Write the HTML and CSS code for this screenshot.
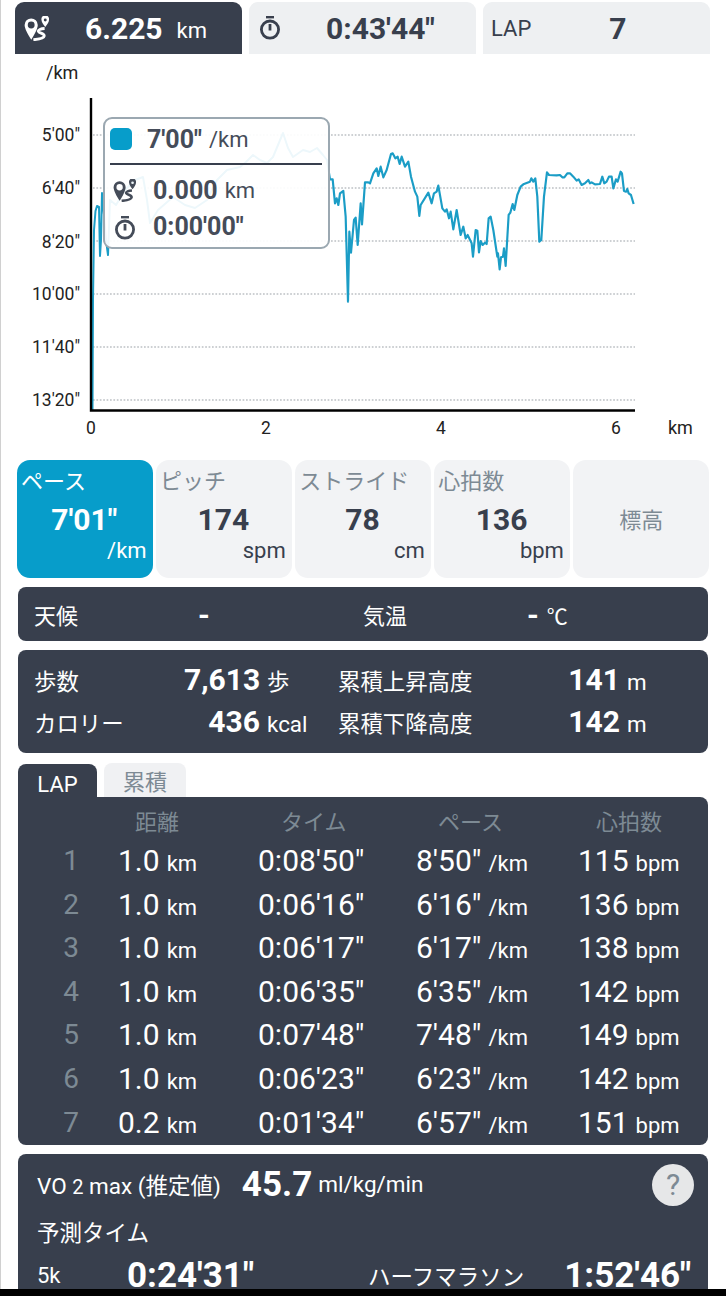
FILE: index.html
```html
<!DOCTYPE html>
<html lang="ja">
<head>
<meta charset="utf-8">
<title>Run detail</title>
<link rel="stylesheet" href="styles.css">
</head>
<body>
<div class="app">
  <svg width="0" height="0" class="defs">
    <symbol id="route" viewBox="0 0 24 24">
      <path d="M0.6 8.6 a6.3 6.3 0 1 1 12.6 0 C13.2 12 10 18 7 22.8 C3.8 18 0.6 12 0.6 8.6Z M3.6 8.6 a3.3 3.3 0 1 0 6.6 0 a3.3 3.3 0 1 0 -6.6 0Z" fill="currentColor" fill-rule="evenodd"/>
      <path d="M16.8 3.9 a3.7 3.7 0 1 1 7.2 0 C24 5.8 22 8.8 20.4 10.6 C18.8 8.8 16.8 5.8 16.8 3.9Z M19 3.9 a1.4 1.4 0 1 0 2.8 0 a1.4 1.4 0 1 0 -2.8 0Z" fill="currentColor" fill-rule="evenodd"/>
      <path d="M19.8 12 C16 12.2 13.4 13.2 13.8 14.8 C14.3 16.6 19.8 16.4 19.4 19.2 C19.1 21.4 14 22.4 9 22.8" fill="none" stroke="currentColor" stroke-width="2.7"/>
    </symbol>
    <symbol id="watch" viewBox="0 0 24 24">
      <path d="M8 1.2 H16" stroke="currentColor" stroke-width="2.4" fill="none"/>
      <circle cx="12" cy="13.6" r="8.6" fill="none" stroke="currentColor" stroke-width="2.8"/>
      <path d="M12 8 V14.5" stroke="currentColor" stroke-width="2.8" fill="none"/>
    </symbol>
  </svg>

  <div class="top-tabs">
    <div class="top-tab is-on">
      <svg class="ico-route"><use href="#route"/></svg>
      <span class="big dist">6.225</span><span class="unit top-unit">km</span>
    </div>
    <div class="top-tab">
      <svg class="ico-watch"><use href="#watch"/></svg>
      <span class="big time">0:43'44"</span>
    </div>
    <div class="top-tab">
      <span class="lap-label">LAP</span><span class="big lap-num">7</span>
    </div>
  </div>

  <div class="chart">
    <svg class="plot" width="726" height="406" viewBox="0 54 726 406">
      <g class="grid">
        <line x1="93" x2="635" y1="135" y2="135"/>
        <line x1="93" x2="635" y1="188" y2="188"/>
        <line x1="93" x2="635" y1="241" y2="241"/>
        <line x1="93" x2="635" y1="294" y2="294"/>
        <line x1="93" x2="635" y1="347" y2="347"/>
        <line x1="93" x2="635" y1="400" y2="400"/>
      </g>
      <polyline class="pace" points="92.5,410 93,300 94,230 95.5,211 97,206 99,207 100,256 101,240 102,193 104,215 106,240 108,255 110,200 116,205 125,190 135,180 143,177 147,200 150,223 158,210 173,197 185,205 195,208 207,200 217,180 227,170 240,167 246,162 253,155 260,160 267,163 273,157 278,145 283,133 288,148 293,157 303,150 310,152 317,148 323,155 327,160 330,179"/>
      <polyline class="pace pace-hi" points="0,118 8,118 15,190 20,175 25,195 30,160 40,153 47,230 54,485 58,275 63,338 72,240 77,233 83,315 92,190 96,253 105,127 115,127 120,130 130,100 140,85 145,108 152,80 160,112 170,90 183,42 188,40 196,55 203,50 209,72 215,50 225,80 235,65 243,110 255,155 262,170 268,228 272,195 295,158 305,190 312,160 320,155 325,137 337,205 345,215 350,208 357,235 362,215 370,268 380,210 392,285 400,260 407,295 413,285 425,310 429,350 437,270 442,272 447,337 452,303 458,315 465,308 470,312 476,235 482,230 490,270 502,350 504,340 509,388 513,352 519,350 522,325 527,378 536,225 541,218 548,192 553,210 562,165 572,140 580,133 600,125 604,115 610,125 616,115 622,170 628,305 634,300 642,170 651,97 657,105 680,106 690,105 697,112 703,112 712,100 720,100 730,110 740,122 746,118 755,135 765,130 775,120 780,130 785,127 795,133 810,132 817,110 823,130 830,125 837,110 845,110 850,145 858,118 863,125 872,95 876,100 882,153 888,155 892,147 896,160 903,165 911,192"/>
      <path class="axis" d="M91 98 V410.5 H635"/>
      <text class="ax-unit" x="46" y="79">/km</text>
      <g class="ax-y">
        <text x="80" y="141">5'00"</text>
        <text x="80" y="194">6'40"</text>
        <text x="80" y="248">8'20"</text>
        <text x="80" y="300">10'00"</text>
        <text x="80" y="353">11'40"</text>
        <text x="80" y="406">13'20"</text>
      </g>
      <g class="ax-x">
        <text x="91" y="434">0</text>
        <text x="266" y="434">2</text>
        <text x="441" y="434">4</text>
        <text x="616" y="434">6</text>
      </g>
      <text class="ax-unit" x="668" y="434">km</text>
    </svg>
    <div class="tip">
      <div class="tip-head">
        <span class="swatch"></span>
        <span class="tip-big">7'00"</span><span class="tip-unit">/km</span>
      </div>
      <div class="tip-row">
        <svg class="tip-ico"><use href="#route"/></svg>
        <span class="tip-big">0.000</span><span class="tip-unit">km</span>
      </div>
      <div class="tip-row">
        <svg class="tip-ico tip-watch"><use href="#watch"/></svg>
        <span class="tip-big">0:00'00"</span>
      </div>
    </div>
  </div>

  <div class="metrics">
    <div class="metric is-on">
      <div class="m-label">ペース</div>
      <div class="m-value">7'01"</div>
      <div class="m-unit">/km</div>
    </div>
    <div class="metric">
      <div class="m-label">ピッチ</div>
      <div class="m-value">174</div>
      <div class="m-unit">spm</div>
    </div>
    <div class="metric">
      <div class="m-label">ストライド</div>
      <div class="m-value">78</div>
      <div class="m-unit">cm</div>
    </div>
    <div class="metric">
      <div class="m-label">心拍数</div>
      <div class="m-value">136</div>
      <div class="m-unit">bpm</div>
    </div>
    <div class="metric metric-plain">標高</div>
  </div>

  <div class="band weather">
    <span class="w-a">天候</span>
    <b class="w-dash">-</b>
    <span class="w-b">気温</span>
    <span class="w-temp"><b class="w-dash-b">-</b><span class="w-c">℃</span></span>
  </div>

  <div class="band summary">
    <span>歩数</span>
    <b class="s-val">7,613</b><span class="s-unit">歩</span>
    <span>累積上昇高度</span>
    <b class="s-val">141</b><span class="s-unit">m</span>
    <span>カロリー</span>
    <b class="s-val">436</b><span class="s-unit">kcal</span>
    <span>累積下降高度</span>
    <b class="s-val">142</b><span class="s-unit">m</span>
  </div>

  <div class="lap-tabs">
    <div class="lap-tab is-on">LAP</div>
    <div class="lap-tab">累積</div>
  </div>
  <div class="band laps">
    <div class="lap-row lap-head">
      <span></span><span class="h-dist">距離</span><span class="h-time">タイム</span><span class="h-pace">ペース</span><span class="h-hr">心拍数</span>
    </div>
    <div class="lap-row"><span class="n">1</span><span>1.0<small>km</small></span><span>0:08'50"</span><span>8'50"<small>/km</small></span><span>115<small>bpm</small></span></div>
    <div class="lap-row"><span class="n">2</span><span>1.0<small>km</small></span><span>0:06'16"</span><span>6'16"<small>/km</small></span><span>136<small>bpm</small></span></div>
    <div class="lap-row"><span class="n">3</span><span>1.0<small>km</small></span><span>0:06'17"</span><span>6'17"<small>/km</small></span><span>138<small>bpm</small></span></div>
    <div class="lap-row"><span class="n">4</span><span>1.0<small>km</small></span><span>0:06'35"</span><span>6'35"<small>/km</small></span><span>142<small>bpm</small></span></div>
    <div class="lap-row"><span class="n">5</span><span>1.0<small>km</small></span><span>0:07'48"</span><span>7'48"<small>/km</small></span><span>149<small>bpm</small></span></div>
    <div class="lap-row"><span class="n">6</span><span>1.0<small>km</small></span><span>0:06'23"</span><span>6'23"<small>/km</small></span><span>142<small>bpm</small></span></div>
    <div class="lap-row"><span class="n">7</span><span>0.2<small>km</small></span><span>0:01'34"</span><span>6'57"<small>/km</small></span><span>151<small>bpm</small></span></div>
  </div>

  <div class="band vo2">
    <div class="vo2-line">
      <span class="vo2-name">VO <span class="sub2">2</span> max (推定値)</span>
      <b class="vo2-num">45.7</b><span class="vo2-unit">ml/kg/min</span>
      <span class="help">?</span>
    </div>
    <div class="pred-title">予測タイム</div>
    <div class="pred-line">
      <span class="p-5k">5k</span><b class="p-time">0:24'31"</b>
      <span class="p-half">ハーフマラソン</span><b class="p-time">1:52'46"</b>
    </div>
  </div>
</div>
</body>
</html>
```
FILE: styles.css
```css
html { background: #000; }
body {
  margin: 0;
  background: #000;
  font-family: Roboto, "Noto Sans CJK JP", sans-serif;
  color: #383f4d;
}
.app {
  box-sizing: border-box;
  width: 726px;
  height: 1289px;
  overflow: hidden;
  background: #fff;
  border-left: 1px solid #d0d0d0;
}
.defs { position: absolute; }
b { font-weight: 700; }

/* top tabs */
.top-tabs {
  display: flex;
  gap: 7px;
  padding: 2px 16px 0 14px;
  height: 52px;
}
.top-tab {
  position: relative;
  flex: 1;
  display: flex;
  align-items: center;
  background: #eef0f2;
  border-radius: 9px 9px 0 0;
  font-size: 22px;
}
.top-tab.is-on { background: #383f4d; color: #fff; }
.big { font-size: 30px; font-weight: 700; }
.ico-route { width: 25px; height: 25px; margin-left: 9px; }
.ico-watch { width: 24px; height: 24px; margin-left: 9px; }
.dist { margin-left: 36px; }
.top-unit { margin-left: 14px; margin-top: 4px; }
.time { margin-left: 44px; }
.lap-label { margin-left: 8px; }
.lap-num { margin-left: 78px; }

/* chart */
.chart { position: relative; height: 406px; margin-left: -1px; }
.plot { display: block; }
.grid line { stroke: #cdd0d3; stroke-width: 1.8; stroke-dasharray: 1.7 1.7; }
.pace { fill: none; stroke: #1b9dc6; stroke-width: 2; stroke-linejoin: round; }
.pace-hi { stroke-width: 6.5; transform: translate(330px, 140px) scale(.3333); }
.axis { fill: none; stroke: #000; stroke-width: 2.4; }
.ax-unit { font-size: 18px; fill: #222; }
.ax-y text { font-size: 17.5px; fill: #222; text-anchor: end; }
.ax-x text { font-size: 17.5px; fill: #222; text-anchor: middle; }

.tip {
  position: absolute;
  left: 103px;
  top: 63px;
  box-sizing: border-box;
  width: 227px;
  height: 132px;
  padding: 0 6px 0 5px;
  background: rgba(255, 255, 255, .92);
  border: 2px solid #9ba8b1;
  border-radius: 9px;
}
.tip-head {
  display: flex;
  align-items: center;
  height: 40px;
  padding-bottom: 4px;
  border-bottom: 2px solid #383f4d;
}
.swatch {
  width: 22px;
  height: 22px;
  border-radius: 5px;
  background: #079dca;
  margin-right: 15px;
}
.tip-big { font-size: 25px; font-weight: 700; color: #454c59; }
.tip-unit { font-size: 22px; margin-left: 7px; color: #454c59; }
.tip-row { display: flex; align-items: center; height: 36px; color: #454c59; }
.tip-row:nth-child(2) { margin-top: 7px; }
.tip-ico { width: 23px; height: 23px; margin: 0 17px 0 3px; }
.tip-watch { width: 24px; height: 24px; margin: 3px 16px 0 3px; }

/* metrics */
.metrics {
  display: grid;
  grid-template-columns: repeat(5, 1fr);
  gap: 3.5px;
  height: 118px;
  margin: 0 17px 0 16px;
}
.metric {
  box-sizing: border-box;
  min-width: 0;
  padding: 7px 6px 0 4px;
  background: #f2f3f5;
  border-radius: 13px;
}
.metric.is-on { background: #079dca; color: #fff; }
.m-label { font-size: 22px; line-height: 30px; color: #7d8a94; white-space: nowrap; }
.is-on .m-label { color: #fff; }
.m-value { font-size: 30px; font-weight: 700; line-height: 38px; text-align: center; margin: 4px 0 0 1px; }
.m-unit { font-size: 22px; line-height: 30px; text-align: right; margin-top: -3px; }
.metric-plain {
  display: flex;
  align-items: center;
  justify-content: center;
  padding: 0 0 2px;
  font-size: 22px;
  color: #7d8a94;
}

/* dark bands */
.band {
  margin: 0 18px 0 17px;
  background: #383f4d;
  border-radius: 8px;
  color: #fff;
  font-size: 22px;
}
.weather {
  display: flex;
  align-items: center;
  height: 54px;
  margin-top: 9px;
}
.w-a { margin-left: 16px; width: 164px; }
.w-dash { width: 165px; font-size: 30px; }
.w-b { width: 164px; }
.w-temp { display: flex; align-items: center; }
.w-dash-b { font-size: 30px; }
.w-c { margin-left: 8px; font-size: 21px; margin-top: 2px; }
.summary {
  display: grid;
  grid-template-columns: 150px 76px 78px 202px 80px auto;
  grid-auto-rows: 42px;
  align-items: baseline;
  height: 103px;
  box-sizing: border-box;
  padding: 12px 0 7px 16px;
  margin-top: 9px;
  font-size: 22.4px;
}
.s-val { font-size: 30px; text-align: right; }
.s-unit { padding-left: 7px; white-space: nowrap; }

/* laps */
.lap-tabs {
  display: flex;
  gap: 7px;
  margin: 10px 18px 0 17px;
  height: 34px;
  align-items: flex-start;
}
.lap-tab {
  width: 82px;
  height: 34px;
  line-height: 39px;
  text-align: center;
  font-size: 22px;
  background: #f0f1f3;
  color: #7d8a94;
  border-radius: 8px 8px 0 0;
}
.lap-tab.is-on {
  width: 79px;
  height: 35px;
  line-height: 41px;
  margin-top: 1px;
  background: #383f4d;
  color: #fff;
}
.laps {
  height: 348px;
  border-radius: 0 8px 8px 8px;
  box-sizing: border-box;
  padding-top: 9px;
}
.lap-row {
  display: grid;
  grid-template-columns: 61px 179px 158px 162px 1fr;
  height: 43.6px;
  line-height: 43.6px;
  font-size: 30px;
  white-space: nowrap;
}
.lap-row span:nth-child(2) { padding-left: 39px; }
.lap-row small { font-size: 22px; margin-left: 7px; }
.n { text-align: right; color: #7d8a94; font-size: 28px; }
.lap-head { height: 33px; line-height: 33px; font-size: 22px; color: #7d8a94; }
.lap-row span.h-dist { padding-left: 56px; }
.h-time { padding-left: 23px; }
.h-pace { padding-left: 22px; }
.h-hr { padding-left: 18px; }

/* vo2 */
.vo2 {
  margin-top: 9px;
  height: 150px;
  padding: 0 0 0 19px;
  border-radius: 8px;
}
.vo2-line { display: flex; align-items: center; height: 60px; position: relative; font-size: 22.5px; }
.sub2 { font-size: 20px; }
.vo2-num { font-size: 35px; margin-left: 21px; }
.vo2-unit { margin-left: 6px; }
.help {
  position: absolute;
  left: 615px;
  top: 10px;
  width: 42px;
  height: 42px;
  line-height: 42px;
  border-radius: 50%;
  background: #e6e7e8;
  color: #7d8a94;
  text-align: center;
  font-size: 30px;
}
.pred-title { line-height: 34px; margin-top: 2px; font-size: 22.5px; }
.pred-line { display: flex; align-items: center; height: 50px; }
.p-5k { width: 90px; }
.p-time { font-size: 35px; }
.p-half { margin-left: 114px; margin-right: 40px; font-size: 22.5px; }
```
